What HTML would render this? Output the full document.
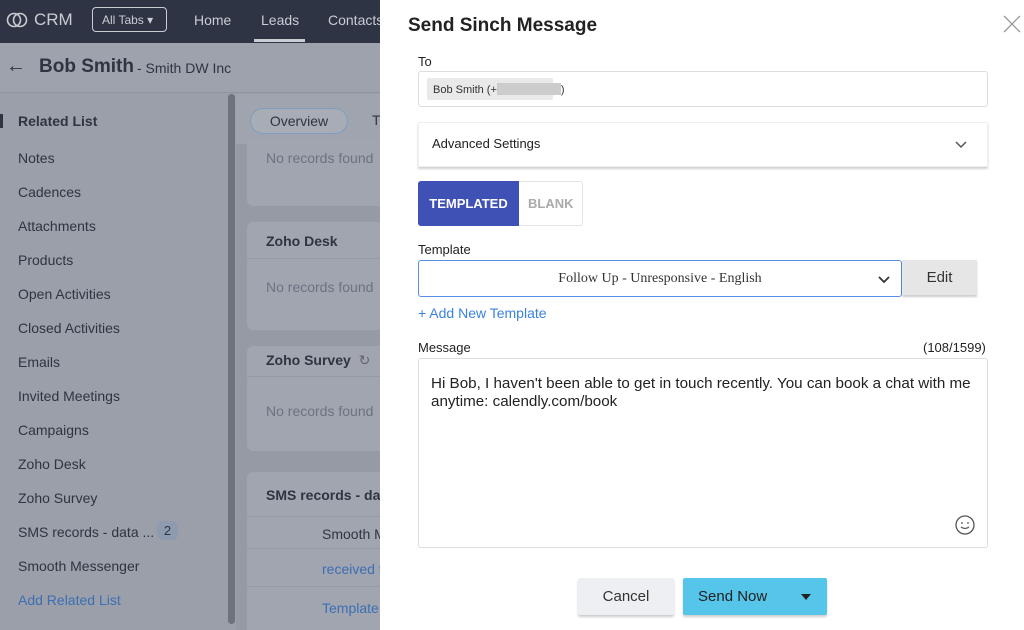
<!DOCTYPE html>
<html><head><meta charset="utf-8"><style>
*{box-sizing:border-box;margin:0;padding:0}
html,body{width:1024px;height:630px;overflow:hidden}
body{position:relative;font-family:"Liberation Sans",sans-serif;background:#9a9fa9}
.hdr{position:absolute;left:0;top:0;width:380px;height:43px;background:#2e3444;color:#c9ccd3;font-size:14px}
.hdr span{position:absolute;top:12px}
.sub{position:absolute;left:0;top:43px;width:380px;height:50px;background:#9da2ad;border-bottom:1px solid #8f949e}
.side{position:absolute;left:0;top:94px;width:236px;height:536px;background:#9a9fa9}
.side div{position:absolute;left:18px;font-size:14px;color:#2f3440}
.scroll{position:absolute;left:228px;top:94px;width:7px;height:530px;background:#6d727b;border-radius:4px}
.main{position:absolute;left:236px;top:94px;width:144px;height:536px;background:#959aa4;overflow:hidden}
.card{position:absolute;left:11px;width:140px;background:#a0a5af;border-radius:6px}
.c{position:absolute;font-size:14px;color:#2f3440;white-space:nowrap}
.nr{color:#6b7282}
.modal{position:absolute;left:380px;top:0;width:644px;height:630px;background:#fff;overflow:hidden}
.m{position:absolute;white-space:nowrap}
.lbl{font-size:13px;color:#222}
</style></head><body>
<div class="hdr">
<svg style="position:absolute;left:6px;top:11px" width="22" height="18" viewBox="0 0 22 18"><circle cx="8" cy="9" r="6.5" fill="none" stroke="#c9ccd3" stroke-width="1.6"/><circle cx="14" cy="9" r="6.5" fill="none" stroke="#c9ccd3" stroke-width="1.6"/></svg>
<span style="left:34px;top:10px;font-size:17px">CRM</span>
<div style="position:absolute;left:92px;top:7px;width:75px;height:25px;border:1px solid #c9ccd3;border-radius:4px;font-size:12px;padding:5px 0 0 9px">All Tabs ▾</div>
<span style="left:194px">Home</span><span style="left:261px">Leads</span>
<div style="position:absolute;left:254px;top:39px;width:51px;height:3px;background:#c9ccd3"></div>
<span style="left:328px">Contacts</span>
</div>
<div class="sub">
<span style="position:absolute;left:6px;top:12px;font-size:20px;color:#2f3440">←</span>
<span style="position:absolute;left:39px;top:13px;font-size:19px;font-weight:bold;color:#2f3440">Bob Smith</span>
<span style="position:absolute;left:137px;top:17px;font-size:14px;color:#2f3440">- Smith DW Inc</span>
</div>
<div class="side">
<div style="left:0;top:20px;width:3px;height:14px;background:#2f3440"></div>
<div style="top:19px;font-weight:bold">Related List</div>
<div style="top:56px">Notes</div><div style="top:90px">Cadences</div><div style="top:124px">Attachments</div>
<div style="top:158px">Products</div><div style="top:192px">Open Activities</div><div style="top:226px">Closed Activities</div>
<div style="top:260px">Emails</div><div style="top:294px">Invited Meetings</div><div style="top:328px">Campaigns</div>
<div style="top:362px">Zoho Desk</div><div style="top:396px">Zoho Survey</div>
<div style="top:430px">SMS records - data ...</div>
<div style="left:157px;top:427px;width:21px;height:19px;border-radius:6px;background:#8e9ab0;text-align:center;padding-top:2px;font-size:13px">2</div>
<div style="top:464px">Smooth Messenger</div>
<div style="top:498px;color:#3d6eb4">Add Related List</div>
</div>
<div class="scroll"></div>
<div class="main">
<div style="position:absolute;left:0;top:0;width:144px;height:50px;background:#9fa4ae"></div>
<div style="position:absolute;left:14px;top:14px;width:98px;height:26px;border:1px solid #7d9ec0;border-radius:14px;background:#a7acb5;font-size:14px;color:#2f3440;text-align:center;padding-top:4px">Overview</div>
<span class="c" style="left:136px;top:18px">T</span>
<div class="card" style="top:45px;height:67px"><span class="c nr" style="left:19px;top:11px">No records found</span></div>
<div class="card" style="top:128px;height:108px"><span class="c" style="left:19px;top:11px;font-weight:bold">Zoho Desk</span><div style="position:absolute;left:0;top:36px;width:140px;height:1px;background:#959aa4"></div><span class="c nr" style="left:19px;top:57px">No records found</span></div>
<div class="card" style="top:252px;height:105px"><span class="c" style="left:19px;top:6px;font-weight:bold">Zoho Survey &nbsp;<span style="font-weight:normal;color:#666">↻</span></span><div style="position:absolute;left:0;top:30px;width:140px;height:1px;background:#959aa4"></div><span class="c nr" style="left:19px;top:57px">No records found</span></div>
<div class="card" style="top:378px;height:170px"><span class="c" style="left:19px;top:15px;font-weight:bold">SMS records - da</span>
<div style="position:absolute;left:0;top:44px;width:140px;height:1px;background:#959aa4"></div>
<span class="c" style="left:75px;top:54px">Smooth M</span>
<div style="position:absolute;left:0;top:76px;width:140px;height:1px;background:#959aa4"></div>
<span class="c" style="left:75px;top:89px;color:#3d6eb4">received t</span>
<div style="position:absolute;left:0;top:114px;width:140px;height:1px;background:#959aa4"></div>
<span class="c" style="left:75px;top:128px;color:#3d6eb4">Template</span></div>
</div>
<div class="modal">
<div class="m" style="left:28px;top:15px;font-size:19px;font-weight:bold;color:#222">Send Sinch Message</div>
<svg class="m" style="left:623px;top:15px" width="18" height="18" viewBox="0 0 18 18"><path d="M1 1L17 17M17 1L1 17" stroke="#999" stroke-width="1.3"/></svg>
<div class="m lbl" style="left:38px;top:54px">To</div>
<div class="m" style="left:38px;top:71px;width:570px;height:36px;border:1px solid #ddd;border-radius:3px"></div>
<div class="m" style="left:47px;top:78px;width:126px;height:22px;background:#e9e9e9;border-radius:2px;font-size:11px;color:#333;padding:5px 0 0 6px">Bob Smith (+<span style="display:inline-block;width:64px;height:12px;background:#ccc;vertical-align:-2px"></span>)</div>
<div class="m" style="left:38px;top:122px;width:570px;height:45px;border:1px solid #eee;box-shadow:0 2px 2px rgba(0,0,0,.18)"></div>
<div class="m" style="left:52px;top:136px;font-size:13px;color:#222">Advanced Settings</div>
<svg class="m" style="left:575px;top:139px" width="12" height="10" viewBox="0 0 12 10"><path d="M1 3L6 8L11 3" stroke="#555" stroke-width="1.5" fill="none"/></svg>
<div class="m" style="left:38px;top:181px;width:165px;height:45px;border:1px solid #e3e3e3;border-radius:3px"></div>
<div class="m" style="left:38px;top:181px;width:101px;height:45px;background:#3f51b5;border-radius:3px 0 0 3px;color:#fff;font-size:13px;font-weight:bold;text-align:center;padding-top:15px">TEMPLATED</div>
<div class="m" style="left:148px;top:196px;font-size:13px;font-weight:bold;color:#aaa">BLANK</div>
<div class="m lbl" style="left:38px;top:242px">Template</div>
<div class="m" style="left:38px;top:260px;width:484px;height:37px;border:1.5px solid #5b8fe6;border-radius:3px;font-family:'Liberation Serif',serif;font-size:14px;color:#333;text-align:center;padding-top:10px">Follow Up - Unresponsive - English</div>
<svg class="m" style="left:498px;top:275px" width="12" height="10" viewBox="0 0 12 10"><path d="M1 2L6 7L11 2" stroke="#333" stroke-width="1.8" fill="none"/></svg>
<div class="m" style="left:522px;top:260px;width:75px;height:35px;background:#e6e6e6;box-shadow:0 2px 2px rgba(0,0,0,.2);font-size:15px;color:#333;text-align:center;padding-top:9px">Edit</div>
<div class="m" style="left:38px;top:305px;font-size:14px;color:#3b82e0">+ Add New Template</div>
<div class="m lbl" style="left:38px;top:340px">Message</div>
<div class="m lbl" style="left:543px;top:340px">(108/1599)</div>
<div class="m" style="left:38px;top:358px;width:570px;height:190px;border:1px solid #ddd;border-radius:3px"></div>
<div class="m" style="left:51px;top:375px;width:555px;white-space:normal;font-size:15.2px;line-height:18px;color:#222">Hi Bob, I haven't been able to get in touch recently. You can book a chat with me anytime: calendly.com/book</div>
<svg class="m" style="left:574px;top:514px" width="22" height="22" viewBox="0 0 22 22"><circle cx="11" cy="11" r="9" fill="none" stroke="#555" stroke-width="1.3"/><path d="M7 13Q11 16 15 13" stroke="#555" stroke-width="1.3" fill="none"/><circle cx="8" cy="9" r=".9" fill="#555"/><circle cx="14" cy="9" r=".9" fill="#555"/></svg>
<div class="m" style="left:198px;top:578px;width:96px;height:37px;background:#eeeff3;border-radius:2px;box-shadow:0 2px 2px rgba(0,0,0,.2);font-size:15px;color:#333;text-align:center;padding-top:10px">Cancel</div>
<div class="m" style="left:303px;top:578px;width:144px;height:37px;background:#56c5ea;border-radius:2px;box-shadow:0 2px 2px rgba(0,0,0,.2);font-size:15px;color:#222;padding:10px 0 0 15px">Send Now<svg style="position:absolute;left:118px;top:16px" width="10" height="6" viewBox="0 0 10 6"><path d="M0 0H10L5 6Z" fill="#222"/></svg></div>
</div>
</body></html>
